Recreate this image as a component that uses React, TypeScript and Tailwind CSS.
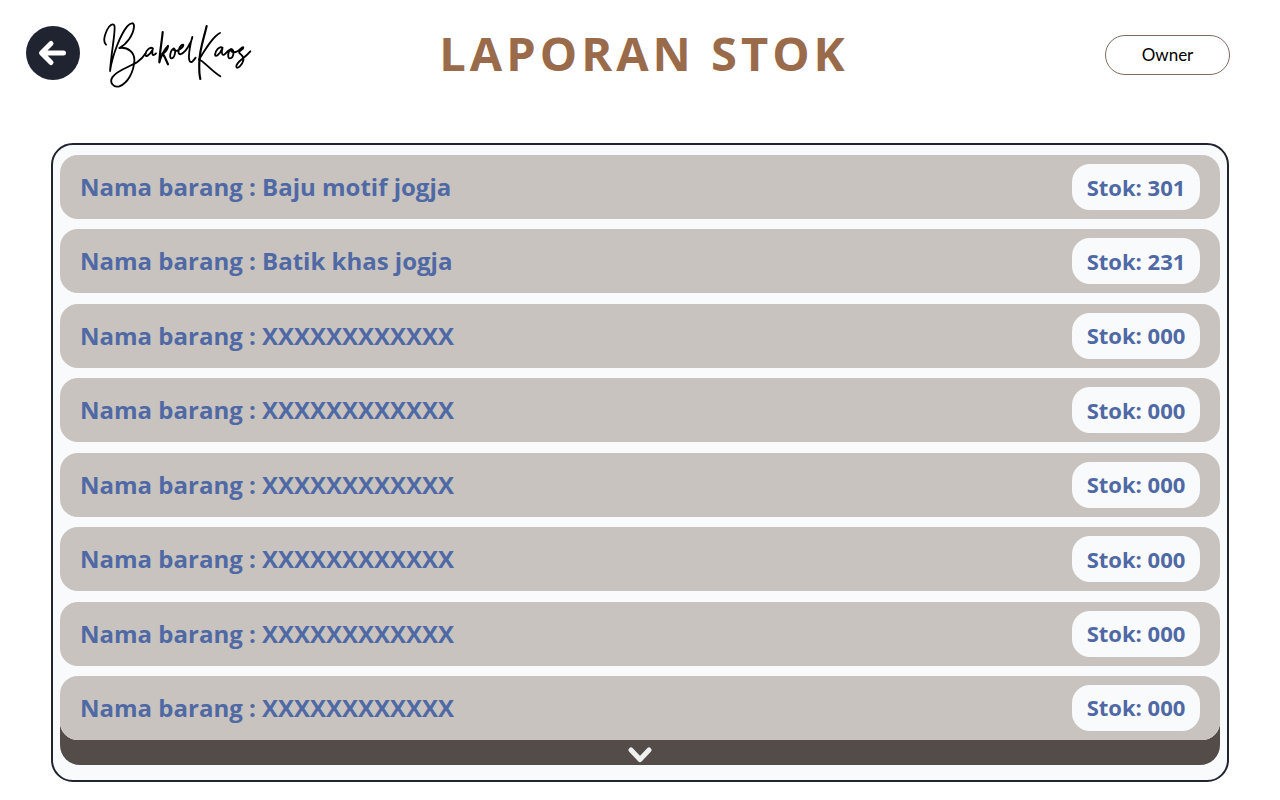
import React from "react";

type Item = { name: string; stock: string };

const items: Item[] = [
  { name: "Baju motif jogja", stock: "301" },
  { name: "Batik khas jogja", stock: "231" },
  { name: "XXXXXXXXXXXX", stock: "000" },
  { name: "XXXXXXXXXXXX", stock: "000" },
  { name: "XXXXXXXXXXXX", stock: "000" },
  { name: "XXXXXXXXXXXX", stock: "000" },
  { name: "XXXXXXXXXXXX", stock: "000" },
  { name: "XXXXXXXXXXXX", stock: "000" },
];

function Logo() {
  return (
    <svg
      role="img"
      aria-label="BakoelKaos"
      viewBox="24 36 450 198"
      className="h-[66px] w-[150px]"
      fill="none"
      stroke="#000"
      strokeWidth="5.5"
      strokeLinecap="round"
      strokeLinejoin="round"
    >
      <path d="M33 104C25 97 28 78 36 60C42 47 54 38 58 46C63 58 51 110 45 183C52 135 76 75 96 50C106 37 118 36 117 50C115 76 94 103 73 114C98 110 120 127 118 153C116 187 98 219 73 229C54 234 43 217 52 202C66 180 104 171 126 157C139 148 146 140 152 130" />
      <path d="M174 116C166 108 152 122 151 133C151 143 162 138 173 119C170 132 172 141 183 130" />
      <path d="M203 66C201 92 194 128 193 157C197 137 211 116 219 108C217 119 209 128 202 131C209 137 213 151 219 163" strokeWidth="6.500" />
      <path d="M236 116C226 119 222 145 229 145C239 145 245 119 236 115C236 125 245 124 252 119C261 115 268 106 264 104C257 103 248 121 251 130C257 139 272 123 279 111C286 98 293 87 292 81C287 96 279 135 283 151C288 163 296 151 302 143" />
      <path d="M335 48C329 76 313 119 313 157C312 180 313 194 316 207" strokeWidth="6.500" />
      <path d="M375 69C355 78 332 116 312 149C323 150 346 180 376 199" />
      <path d="M383 114C373 105 361 124 360 134C361 143 374 134 382 116C378 130 382 141 392 130C399 122 402 119 407 118C397 125 398 147 405 145C416 143 420 120 408 117C407 129 421 129 430 122C437 117 441 110 445 112C447 120 430 120 433 129C438 135 448 138 445 151C442 164 427 180 424 170C423 155 446 148 466 124" />
    </svg>
  );
}

export default function App() {
  return (
    <div className="min-h-screen bg-white pb-4 font-['Open_Sans','Noto_Sans',sans-serif]">
      <header className="grid grid-cols-[1fr_auto_1fr] items-center pt-[22px] pr-[18px] pl-[26px]">
        <div className="flex items-center gap-[23px]">
          <button
            type="button"
            aria-label="Kembali"
            className="-mt-1 flex size-[54px] items-center justify-center rounded-full bg-[#202330]"
          >
            <svg viewBox="0 0 54 54" className="size-[54px]" fill="none" stroke="#fff" strokeWidth="5" strokeLinecap="round" strokeLinejoin="round">
              <path d="M25 17.500L15.500 27L25 36.500M16.500 27H37.500" />
            </svg>
          </button>
          <Logo />
        </div>
        <h1 className="self-start text-[47px] leading-[62px] font-bold tracking-[4px] text-[#996b4a]">LAPORAN STOK</h1>
        <button
          type="button"
          className="mr-8 h-10 w-[125px] justify-self-end rounded-full border border-[#80695f] bg-white font-['Lato',sans-serif] text-[17px] text-black"
        >
          Owner
        </button>
      </header>

      <main className="mx-[51px] mt-[55px] rounded-[22px] border-2 border-[#202330] bg-[#f9fafc] px-[7px] pt-[10px] pb-[15px]">
        <div className="rounded-[20px] bg-[#534c49]">
          <ul className="flex min-h-[585px] flex-col justify-between rounded-b-[18px] bg-[#f9fafc]">
            {items.map((item, index) => (
              <li
                key={index}
                className="flex h-16 items-center justify-between rounded-[18px] bg-[#c9c3bf] px-5 font-bold text-[#4f69a5]"
              >
                <span className="text-2xl">Nama barang : {item.name}</span>
                <span className="flex h-[46px] w-32 items-center justify-center rounded-[18px] bg-[#f9fafc] text-[22px]">
                  Stok: {item.stock}
                </span>
              </li>
            ))}
          </ul>
          <button
            type="button"
            aria-label="Lihat lebih banyak"
            className="flex h-[25px] w-full items-center justify-center pt-1"
          >
            <svg viewBox="0 0 24 16" className="h-4 w-6" fill="none" stroke="#f0f0f0" strokeWidth="5" strokeLinecap="round" strokeLinejoin="round">
              <path d="M3 3L12 12.500L21 3" />
            </svg>
          </button>
        </div>
      </main>
    </div>
  );
}
